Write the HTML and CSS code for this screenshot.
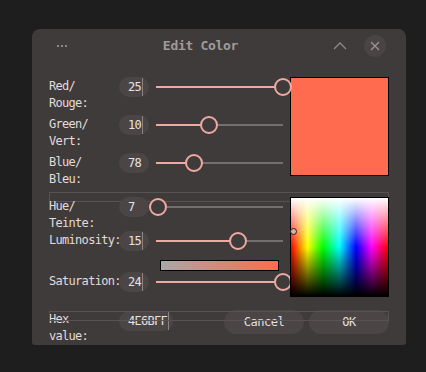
FILE: index.html
```html
<!DOCTYPE html>
<html lang="en">
<head>
    <meta charset="UTF-8">
    <title>Edit Color</title>
    <link rel="stylesheet" href="styles.css">
</head>
<body>

<div class="dialog">

    <div class="titlebar">
        <div class="tb_left">
            <span class="dot"></span><span class="dot"></span><span class="dot"></span>
        </div>
        <div class="tb_title">Edit Color</div>
        <div class="tb_right">
            <svg class="chevron" width="14" height="8" viewBox="0 0 14 8">
                <path d="M1 7 L7 1 L13 7" fill="none" stroke="#8f8787" stroke-width="1.3"/>
            </svg>
            <div class="close">
                <svg width="10" height="10" viewBox="0 0 10 10">
                    <path d="M1 1 L9 9 M9 1 L1 9" stroke="#9c9494" stroke-width="1.3"/>
                </svg>
            </div>
        </div>
    </div>

    <div class="body">

        <div class="sep sep_top"></div>
        <div class="sep sep_bottom"></div>

        <!-- RGB -->
        <div class="section rgb">
            <div class="rows">
                <div class="row">
                    <div class="label">Red/<br>Rouge:</div>
                    <div class="spin">25<span class="caret"></span></div>
                    <div class="slider">
                        <div class="track"></div>
                        <div class="fill" style="width: 100%"></div>
                        <div class="handle" style="left: 100%"></div>
                    </div>
                </div>
                <div class="row">
                    <div class="label">Green/<br>Vert:</div>
                    <div class="spin">10<span class="caret"></span></div>
                    <div class="slider">
                        <div class="track"></div>
                        <div class="fill" style="width: 41.7%"></div>
                        <div class="handle" style="left: 41.7%"></div>
                    </div>
                </div>
                <div class="row">
                    <div class="label">Blue/<br>Bleu:</div>
                    <div class="spin">78</div>
                    <div class="slider">
                        <div class="track"></div>
                        <div class="fill" style="width: 29.9%"></div>
                        <div class="handle" style="left: 29.9%"></div>
                    </div>
                </div>
            </div>
            <div class="preview"></div>
        </div>

        <!-- HSL -->
        <div class="section hsl">
            <div class="rows">
                <div class="row">
                    <div class="label">Hue/<br>Teinte:</div>
                    <div class="spin">7</div>
                    <div class="slider">
                        <div class="track"></div>
                        <div class="handle" style="left: 1.8%"></div>
                    </div>
                </div>
                <div class="row row_lum">
                    <div class="label">Luminosity:</div>
                    <div class="spin">15<span class="caret"></span></div>
                    <div class="slider">
                        <div class="track"></div>
                        <div class="fill" style="width: 64.6%"></div>
                        <div class="handle" style="left: 64.6%"></div>
                    </div>
                </div>
                <div class="sat_bar"></div>
                <div class="row">
                    <div class="label">Saturation:</div>
                    <div class="spin">24<span class="caret"></span></div>
                    <div class="slider">
                        <div class="track"></div>
                        <div class="fill" style="width: 100%"></div>
                        <div class="handle" style="left: 100%"></div>
                    </div>
                </div>
            </div>
            <div class="picker">
                <div class="picker_shade"></div>
                <div class="marker"></div>
            </div>
        </div>

        <!-- Hex + buttons -->
        <div class="footer">
            <div class="label">Hex<br>value:</div>
            <div class="spin hex">4E6BFF<span class="caret"></span></div>
            <button class="btn btn_cancel">Cancel</button>
            <button class="btn btn_ok">OK</button>
        </div>

    </div>
</div>

</body>
</html>
```

FILE: styles.css
```css
*{
    margin: 0px;
    padding: 0px;
    box-sizing: border-box;
}
body{
    background-color: #1e1e1e;
    font-family: "DejaVu Sans Mono", "Liberation Mono", monospace;
    font-size: 12px;
    letter-spacing: -0.7px;
    color: #e2dcdc;
}

.dialog{
    width: 374px;
    height: 316px;
    margin: 29px 0px 0px 32px;
    background-color: #403b3b;
    border-radius: 8px 8px 3px 3px;
}

/* title bar */
.titlebar{
    height: 33px;
    display: flex;
    align-items: center;
}
.tb_left{
    width: 41px;
    padding-left: 25px;
    display: flex;
    gap: 2px;
}
.dot{
    width: 2px;
    height: 2px;
    background-color: #8d8585;
}
.tb_title{
    flex: 1;
    text-align: center;
    font-size: 13px;
    font-weight: bold;
    letter-spacing: -0.3px;
    color: #a29a9a;
}
.tb_right{
    display: flex;
    align-items: center;
    padding-right: 20px;
}
.chevron{
    margin: 0px 17px 0px 5px;
}
.close{
    width: 22px;
    height: 22px;
    border-radius: 50%;
    background-color: #4a4444;
    display: flex;
    align-items: center;
    justify-content: center;
}

/* body */
.body{
    position: relative;
    padding: 15px 17px 0px;
}
.sep{
    position: absolute;
    left: 17px;
    right: 17px;
    height: 10px;
    border: 1px solid #585252;
}
.sep_top{
    top: 130px;
}
.sep_bottom{
    top: 249px;
}

.section{
    display: grid;
    grid-template-columns: 241px 99px;
}
.rgb .rows{
    display: flex;
    flex-direction: column;
    gap: 18px;
}
.preview{
    height: 99px;
    background-color: #ff6b4e;
    border: 1px solid #000;
}

.hsl{
    margin-top: 21px;
    position: relative;
}
.hsl .rows{
    display: flex;
    flex-direction: column;
}
.row_lum{
    margin-top: 14px;
}
.sat_bar{
    width: 119px;
    height: 11px;
    margin: 9px 0px 1px 111px;
    border: 1px solid #000;
    background: linear-gradient(to right, #a8a8a8, #ff6b4e);
}
.picker{
    position: relative;
    height: 100px;
    border: 1px solid #000;
    background: linear-gradient(to right, #f00 0%, #ff0 17%, #0f0 33%, #0ff 50%, #00f 67%, #f0f 83%, #f00 100%);
}
.picker_shade{
    height: 100%;
    background: linear-gradient(to bottom, #fff 0%, rgba(255,255,255,0) 50%, rgba(0,0,0,0) 50%, #000 100%);
}
.marker{
    position: absolute;
    left: -1px;
    top: 30px;
    width: 7px;
    height: 7px;
    border-radius: 50%;
    border: 1.5px solid #222;
    background-color: #e8a8a0;
}

/* rows */
.row{
    display: flex;
    align-items: flex-start;
    height: 20px;
}
.label{
    width: 70px;
    flex-shrink: 0;
    line-height: 17px;
    padding-top: 1px;
    white-space: nowrap;
}
.spin{
    width: 30px;
    height: 20px;
    flex-shrink: 0;
    line-height: 20px;
    padding-left: 9px;
    border-radius: 10px;
    background-color: #4b4545;
    color: #e8e2e2;
    white-space: nowrap;
}
.caret{
    display: inline-block;
    width: 1px;
    height: 18px;
    margin-left: 1px;
    vertical-align: top;
    margin-top: 1px;
    background-color: #8a8484;
}
.slider{
    position: relative;
    width: 127px;
    height: 20px;
    margin-left: 7px;
    flex-shrink: 0;
}
.track,.fill{
    position: absolute;
    left: 0px;
    top: 9px;
    height: 2px;
}
.track{
    width: 100%;
    background-color: #746e6e;
}
.fill{
    background-color: #eeaaa2;
}
.handle{
    position: absolute;
    top: 1px;
    width: 18px;
    height: 18px;
    margin-left: -9px;
    border-radius: 50%;
    border: 2px solid #eeaaa2;
    background-color: #403b3b;
}

/* footer */
.footer{
    display: flex;
    align-items: flex-start;
    margin-top: 13px;
}
.footer .label{
    padding-top: 1px;
}
.hex{
    width: 54px;
    margin-top: 1px;
}
.btn{
    height: 24px;
    width: 80px;
    border: none;
    border-radius: 12px;
    background-color: #4b4545;
    color: #e6e0e0;
    font-family: "DejaVu Sans Mono", "Liberation Mono", monospace;
    font-size: 12px;
    letter-spacing: -0.5px;
}
.btn_cancel{
    margin-left: 51px;
}
.btn_ok{
    margin-left: 5px;
}
```
